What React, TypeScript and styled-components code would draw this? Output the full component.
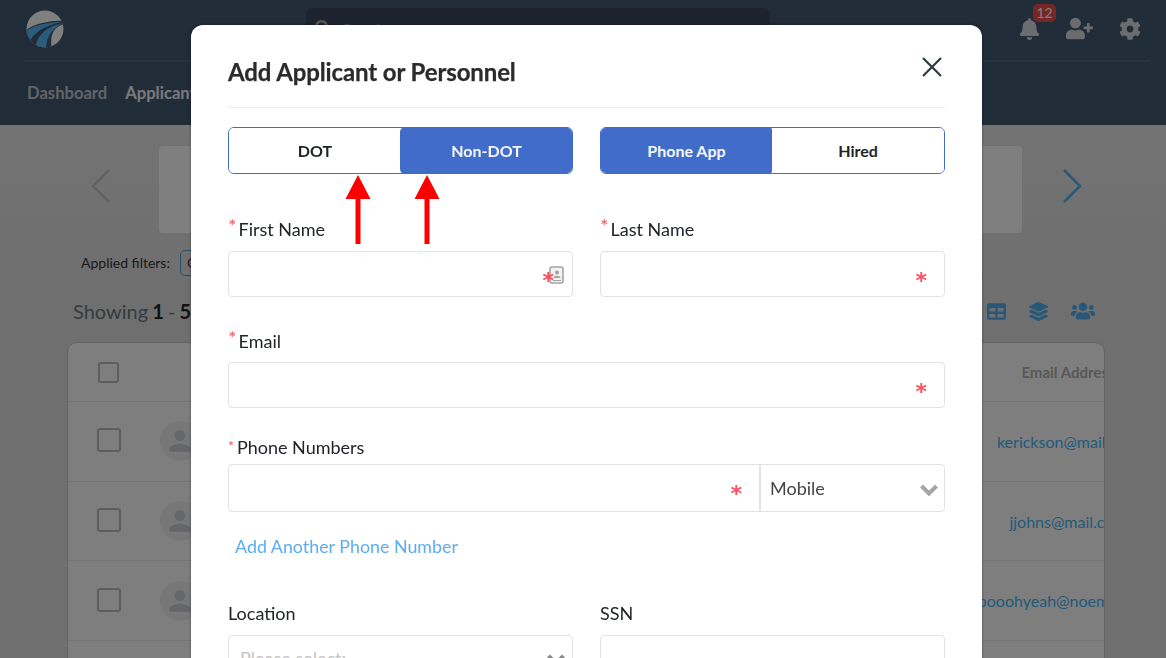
import React from "react";
import styled, { createGlobalStyle } from "styled-components";
import { FaBell, FaUserPlus, FaCog, FaTable, FaLayerGroup, FaUsers, FaSearch } from "react-icons/fa";
import { MdPerson } from "react-icons/md";

const GlobalStyle = createGlobalStyle`
	html, body {
		margin: 0;
		height: 100%;
		overflow: hidden;
		font-family: Lato, "Open Sans", sans-serif;
		color: #212529;
	}
	* {
		box-sizing: border-box;
	}
`;

const Page = styled.div`
	height: 658px;
	overflow: hidden;
	background: linear-gradient(#ececec, #dedede 45%);
`;

const Header = styled.header`
	height: 125px;
	background: #425872;
	padding: 0 16px 0 24px;
`;

const TopBar = styled.div`
	height: 62px;
	display: flex;
	align-items: flex-start;
	border-bottom: 2px solid #52677d;
	padding-top: 10px;
`;

const Logo = styled.svg`
	width: 38px;
	height: 38px;
	margin-left: 2px;
	flex: none;
`;

const SearchBox = styled.div`
	width: 464px;
	height: 40px;
	margin: -2px 0 0 242px;
	background: #38445c;
	border-radius: 6px;
	display: flex;
	align-items: center;
	padding-left: 9px;
	gap: 12px;
	color: #aaa;
	font-size: 14px;
	svg {
		width: 16px;
		height: 16px;
	}
`;

const TopIcons = styled.div`
	margin-left: auto;
	display: flex;
	align-items: center;
	gap: 26px;
	margin-right: 9px;
	padding-top: 5px;
	color: #d4d8dc;
`;

const BellWrap = styled.div`
	position: relative;
	height: 22px;
	svg {
		width: 21px;
		height: 22px;
	}
`;

const Badge = styled.span`
	position: absolute;
	top: -14px;
	left: 14px;
	background: #ee4d4d;
	color: #fff;
	font-size: 14px;
	line-height: 18px;
	padding: 0 3.5px;
	border-radius: 5px;
`;

const NavRow = styled.nav`
	display: flex;
	gap: 18px;
	padding: 21px 0 0 3px;
	font-size: 16.6px;
	font-weight: 700;
	line-height: 20px;
`;

const NavLink = styled.span<{ $active?: boolean }>`
	color: ${(p) => (p.$active ? "#f2f2f2" : "#c4c8cc")};
`;

const Carousel = styled.div`
	display: flex;
	align-items: center;
	height: 87px;
	margin-top: 21px;
	padding-left: 90px;
`;

const Chevron = styled.svg`
	width: 21px;
	height: 36px;
	margin-bottom: 7px;
	fill: none;
	stroke-width: 2.5;
	flex: none;
`;

const CarouselCard = styled.div`
	width: 863px;
	height: 87px;
	margin: 0 40px 0 48px;
	background: #fff;
	border-radius: 4px;
`;

const FilterRow = styled.div`
	display: flex;
	align-items: center;
	gap: 10px;
	padding: 17px 0 0 81px;
	font-size: 14px;
	line-height: 22px;
	color: #333;
`;

const FilterChip = styled.span`
	width: 60px;
	height: 26px;
	border: 1px solid #4a9be0;
	border-radius: 5px;
	padding: 1px 0 0 6px;
`;

const ResultsRow = styled.div`
	display: flex;
	align-items: center;
	padding: 19px 71px 0 73px;
	font-size: 20px;
	word-spacing: -1px;
	line-height: 32px;
	color: #6c757d;
	b {
		color: #212529;
	}
`;

const ViewIcons = styled.div`
	margin-left: auto;
	display: flex;
	align-items: center;
	gap: 23px;
	color: #4fb0f5;
	font-size: 19px;
	svg {
		display: block;
	}
`;

// taller than what is left of the page, it runs off the bottom as in a long list
const Table = styled.div`
	width: 1038px;
	height: 340px;
	margin: 15px 0 0 67px;
	background: #fdfdfd;
	border: 1px solid #c8c8c8;
	border-radius: 10px 10px 0 0;
	overflow: hidden;
`;

const Row = styled.div<{ $head?: boolean }>`
	display: flex;
	align-items: center;
	height: ${(p) => (p.$head ? "59px" : "79.7px")};
	padding-left: 29px;
	border-bottom: 1px solid #eaeaea;
`;

const Check = styled.span<{ $head?: boolean }>`
	width: ${(p) => (p.$head ? "21px" : "24px")};
	height: ${(p) => (p.$head ? "21px" : "24px")};
	margin: ${(p) => (p.$head ? "0 0 0 1px" : "0 0 2px")};
	border: 2px solid #bbb;
	border-radius: 3px;
	flex: none;
`;

const Avatar = styled.span`
	width: 40px;
	height: 40px;
	margin-left: 39px;
	border-radius: 50%;
	background: #eee;
	color: #c8cdd2;
	display: flex;
	align-items: center;
	justify-content: center;
	flex: none;
`;

// the column runs past the table's right edge, so the table clips the text
const EmailCell = styled.span<{ $head?: boolean }>`
	margin-left: auto;
	margin-right: -64px;
	width: 200px;
	flex: none;
	text-align: center;
	white-space: nowrap;
	font-size: ${(p) => (p.$head ? "15px" : "16px")};
	font-weight: ${(p) => (p.$head ? 700 : 400)};
	color: ${(p) => (p.$head ? "#b0b0b0" : "#45b5f5")};
`;

const Overlay = styled.div`
	position: fixed;
	inset: 0;
	background: rgba(0, 0, 0, 0.5);
`;

const Modal = styled.div`
	position: fixed;
	top: 25px;
	left: 191px;
	width: 791px;
	height: 700px;
	background: #fff;
	border-radius: 12px;
	padding: 0 37px;
	box-shadow: 0 0 3px rgba(0, 0, 0, 0.4);
`;

const ModalHead = styled.div`
	height: 83px;
	display: flex;
	align-items: flex-start;
	justify-content: space-between;
	border-bottom: 1px solid #e9ecef;
	padding-top: 32px;
`;

const Title = styled.h2`
	margin: 0;
	font-size: 24px;
	letter-spacing: -0.12px;
	-webkit-text-stroke: 0.25px #2b2b2b;
	line-height: 30px;
	font-weight: 700;
	color: #2b2b2b;
`;

const CloseBtn = styled.svg`
	width: 20px;
	height: 20px;
	margin: 0 3px 0 0;
	stroke: #2f3b3b;
	stroke-width: 2.2;
`;

const Grid = styled.div<{ $top: number }>`
	display: grid;
	grid-template-columns: 345px 345px;
	column-gap: 27px;
	margin-top: ${(p) => p.$top}px;
`;

const Toggle = styled.div`
	display: flex;
	height: 47px;
	border: 1px solid #426cc9;
	border-radius: 6px;
	overflow: hidden;
`;

const ToggleOption = styled.div<{ $on?: boolean }>`
	flex: ${(p) => (p.$on ? "none" : "1")};
	width: ${(p) => (p.$on ? "173px" : "auto")};
	display: flex;
	align-items: center;
	justify-content: center;
	font-size: 16px;
	font-weight: 700;
	margin: ${(p) => (p.$on ? "-1px" : "0")};
	border-radius: ${(p) => (p.$on ? "5px" : "0")};
	background: ${(p) => (p.$on ? "#426cc9" : "#fff")};
	color: ${(p) => (p.$on ? "#f5f7fc" : "#212529")};
`;

const Field = styled.div<{ $top?: number }>`
	min-width: 0;
	margin-top: ${(p) => p.$top ?? 0}px;
`;

const Label = styled.label<{ $gap?: number }>`
	display: block;
	font-size: 18px;
	line-height: 22px;
	margin-bottom: ${(p) => p.$gap ?? 11}px;
	color: #212529;
	white-space: nowrap;
`;

const Req = styled.span<{ $small?: boolean }>`
	color: #ff4d5e;
	font-size: ${(p) => (p.$small ? "14px" : "20px")};
	margin-right: ${(p) => (p.$small ? "3px" : "2px")};
	position: relative;
	top: -3px;
`;

const InputBox = styled.div`
	position: relative;
	height: 46px;
	border: 1px solid #e3e3e3;
	border-radius: 4px;
	background: #fff;
`;

const Star = styled.span<{ $right?: number }>`
	position: absolute;
	right: ${(p) => p.$right ?? 17}px;
	top: 17px;
	color: #ff4d5e;
	font-size: 22px;
	line-height: 24px;
	font-weight: 700;
	font-family: "DejaVu Sans", sans-serif;
`;

const ContactIcon = styled.svg`
	position: absolute;
	right: 8px;
	top: 14px;
	width: 15px;
	height: 18px;
`;

const PhoneRow = styled.div`
	display: flex;
	height: 48px;
	border: 1px solid #e3e3e3;
	border-radius: 4px;
`;

const PhoneInput = styled.div`
	position: relative;
	flex: 1;
	border-right: 2px solid #e3e3e3;
`;

const PhoneType = styled.div`
	width: 183px;
	display: flex;
	align-items: center;
	justify-content: space-between;
	padding: 0 6px 0 9px;
	font-size: 18px;
	color: #444;
`;

const SelectArrow = styled.svg<{ $shade: string }>`
	width: 18px;
	height: 12px;
	margin-top: 3px;
	fill: none;
	stroke: ${(p) => p.$shade};
	stroke-width: 4;
`;

const Caret = ({ shade }: { shade: string }) => (
	<SelectArrow $shade={shade} viewBox="0 0 18 12">
		<path d="M1.5 2 L9 9.5 L16.5 2" />
	</SelectArrow>
);

const AddLink = styled.a`
	display: block;
	margin: 23px 0 0 7px;
	font-size: 17.85px;
	line-height: 22px;
	color: #5cadf0;
`;

const SelectBox = styled(InputBox)`
	display: flex;
	align-items: center;
	justify-content: space-between;
	padding: 0 7px 0 11px;
	font-size: 18px;
	color: #c4c4c4;
`;

const ArrowMark = styled.svg<{ $x: number }>`
	position: absolute;
	left: ${(p) => p.$x}px;
	top: 150px;
	width: 26px;
	height: 70px;
	fill: #ff0000;
`;

const Arrow = ({ x }: { x: number }) => (
	<ArrowMark $x={x} viewBox="0 0 26 70">
		<path d="M13 0 L25.5 24 L15.5 24 L15.5 69 L10.5 69 L10.5 24 L0.5 24 Z" />
	</ArrowMark>
);

const rows = ["kerickson@mail.com", "jjohns@mail.com", "booohyeah@noemail.com"];

export default function App() {
	return (
		<>
			<GlobalStyle />
			<Page>
				<Header>
					<TopBar>
						<Logo viewBox="0 0 38 38">
							<defs>
								<clipPath id="logo-disc">
									<circle cx="19" cy="19" r="18.5" />
								</clipPath>
							</defs>
							<g clipPath="url(#logo-disc)">
								<rect width="38" height="38" fill="#fff" />
								<path d="M0 20 C8 14 20 11 38 10.5 L38 14 C28 17 24 23 25.5 38 L0 38 Z" fill="#425872" />
								<path d="M0 21 C8 15.5 20 12.5 37 11.5 C24 15 10 19 4 31 C2 28 0.5 25 0 21 Z" fill="#58b8f8" />
								<path d="M10 36 C11 25 22 16 37 13 C28 17.5 21 24 20 38 L10 38 Z" fill="#58b8f8" />
							</g>
						</Logo>
						<SearchBox>
							<FaSearch />
							Search
						</SearchBox>
						<TopIcons>
							<BellWrap>
								<FaBell />
								<Badge>12</Badge>
							</BellWrap>
							<FaUserPlus size={27} />
							<FaCog size={22} />
						</TopIcons>
					</TopBar>
					<NavRow>
						<NavLink>Dashboard</NavLink>
						<NavLink $active>Applicants</NavLink>
					</NavRow>
				</Header>
				<Carousel>
					<Chevron viewBox="0 0 21 36" stroke="#c4c4c4">
						<path d="M19 2 L3 18 L19 34" />
					</Chevron>
					<CarouselCard />
					<Chevron viewBox="0 0 21 36" stroke="#4fb0f5">
						<path d="M2 2 L18 18 L2 34" />
					</Chevron>
				</Carousel>
				<FilterRow>
					Applied filters:
					<FilterChip>Open</FilterChip>
				</FilterRow>
				<ResultsRow>
					<span>
						Showing <b>1</b> - <b>50</b> of <b>50</b>
					</span>
					<ViewIcons>
						<FaTable />
						<FaLayerGroup />
						<FaUsers size={24} />
					</ViewIcons>
				</ResultsRow>
				<Table>
					<Row $head>
						<Check $head />
						<EmailCell $head>Email Address</EmailCell>
					</Row>
					{rows.map((email) => (
						<Row key={email}>
							<Check />
							<Avatar>
								<MdPerson size={32} />
							</Avatar>
							<EmailCell>{email}</EmailCell>
						</Row>
					))}
				</Table>
			</Page>
			<Overlay />
			<Modal>
				<ModalHead>
					<Title>Add Applicant or Personnel</Title>
					<CloseBtn viewBox="0 0 20 20">
						<path d="M1 1 L19 19 M19 1 L1 19" />
					</CloseBtn>
				</ModalHead>
				<Grid $top={19}>
					<Toggle>
						<ToggleOption>DOT</ToggleOption>
						<ToggleOption $on>Non-DOT</ToggleOption>
					</Toggle>
					<Toggle>
						<ToggleOption $on>Phone App</ToggleOption>
						<ToggleOption>Hired</ToggleOption>
					</Toggle>
				</Grid>
				<Arrow x={154} />
				<Arrow x={223} />
				<Grid $top={43}>
					<Field>
						<Label>
							<Req>*</Req>First Name
						</Label>
						<InputBox>
							<ContactIcon viewBox="0 0 15 18">
								<rect x="1" y="1" width="13" height="16" rx="2" fill="#f2f2f2" stroke="#a3a3a3" strokeWidth="1.6" />
								<circle cx="8" cy="6.5" r="2" fill="#a3a3a3" />
								<path d="M4.5 12 C4.5 9 11.5 9 11.5 12 Z M4 14 H12 V15 H4 Z" fill="#a3a3a3" />
							</ContactIcon>
							<Star $right={18}>*</Star>
						</InputBox>
					</Field>
					<Field>
						<Label>
							<Req>*</Req>Last Name
						</Label>
						<InputBox>
							<Star>*</Star>
						</InputBox>
					</Field>
				</Grid>
				<Field $top={32}>
					<Label $gap={10}>
						<Req>*</Req>Email
					</Label>
					<InputBox>
						<Star>*</Star>
					</InputBox>
				</Field>
				<Field $top={28}>
					<Label $gap={4}>
						<Req $small>*</Req>Phone Numbers
					</Label>
					<PhoneRow>
						<PhoneInput>
							<Star>*</Star>
						</PhoneInput>
						<PhoneType>
							Mobile
							<Caret shade="#a5a5a5" />
						</PhoneType>
					</PhoneRow>
				</Field>
				<AddLink>Add Another Phone Number</AddLink>
				<Grid $top={45}>
					<Field>
						<Label>Location</Label>
						<SelectBox>
							Please select:
							<Caret shade="#888" />
						</SelectBox>
					</Field>
					<Field>
						<Label>SSN</Label>
						<InputBox />
					</Field>
				</Grid>
			</Modal>
		</>
	);
}
